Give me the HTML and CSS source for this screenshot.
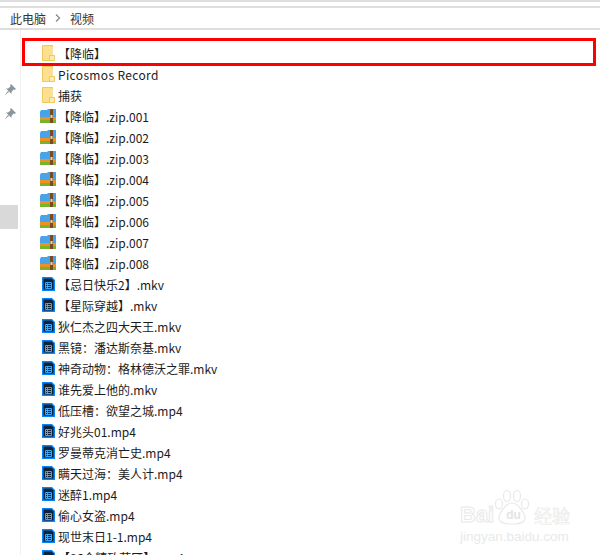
FILE: index.html
```html
<!DOCTYPE html>
<html lang="zh-CN">
<head>
<meta charset="utf-8">
<title>视频</title>
<link rel="stylesheet" href="styles.css">
</head>
<body>
<svg class="defs" width="0" height="0" aria-hidden="true">
  <defs>
    <symbol id="folder" viewBox="0 0 13 16">
      <path d="M.5.5H10.500V15.500H.5Z" fill="#fde08e" stroke="#edc95f"/>
      <path d="M10.500 2V10H12.500V2Z" fill="#fff"/>
      <path d="M7.500 10.500H12.500V15.500H7.500Z" fill="#fdebb5" stroke="#edc95f"/>
    </symbol>
    <symbol id="zip" viewBox="0 0 16 14">
      <path d="M0 3 1 1H7L8 0H16V8H0Z" fill="#48a4e8"/>
      <rect y="8" width="16" height="3" fill="#ee9022"/>
      <rect y="11" width="16" height="3" fill="#74b52c"/>
      <rect x="10" width="3" height="14" fill="#7a4a20"/>
      <rect x="10.500" y="6" width="2" height="3" fill="#e6d9b0"/>
    </symbol>
    <symbol id="video" viewBox="0 0 13 14">
      <path d="M0 0H10L13 3V14H0Z" fill="#0a84f5"/>
      <path d="M1.500 1.500H9.500L11.500 3.500V12.500H1.500Z" fill="#0e2238"/>
      <path d="M3.500 5.500H9.500V11.500H3.500ZM3.500 7.500H9.500M3.500 9.500H9.500M5.500 5.500V11.500" stroke="#3fa4ee" fill="none"/>
    </symbol>
    <symbol id="pin" viewBox="0 0 12 12">
      <path d="M7 0 12 5 10.500 6 9.500 5.500 7.500 8 7.500 10 2 4.500 4 4.500 6.500 2.500 6 1.500ZM4 7 .5 11.500 5 8Z" fill="#8a979f"/>
    </symbol>
  </defs>
</svg>
<div class="window">
  <div class="topband"></div>
  <nav class="crumbs">
    <span>此电脑</span>
    <svg class="chev" viewBox="0 0 6 8" width="6" height="8"><path d="M1 .5 4.500 4 1 7.500" fill="none" stroke="#8a8a8a" stroke-width="1.300"/></svg>
    <span>视频</span>
  </nav>
  <div class="body">
    <aside class="side">
      <svg class="pin"><use href="#pin"/></svg>
      <svg class="pin pin-second"><use href="#pin"/></svg>
      <div class="side-sel"></div>
    </aside>
    <ul class="files">
      <li class="row"><svg class="ico ico-folder"><use href="#folder"/></svg><span>【降临】</span></li>
      <li class="row"><svg class="ico ico-folder"><use href="#folder"/></svg><span class="latin">Picosmos Record</span></li>
      <li class="row"><svg class="ico ico-folder"><use href="#folder"/></svg><span>捕获</span></li>
      <li class="row"><svg class="ico ico-zip"><use href="#zip"/></svg><span>【降临】.zip.001</span></li>
      <li class="row"><svg class="ico ico-zip"><use href="#zip"/></svg><span>【降临】.zip.002</span></li>
      <li class="row"><svg class="ico ico-zip"><use href="#zip"/></svg><span>【降临】.zip.003</span></li>
      <li class="row"><svg class="ico ico-zip"><use href="#zip"/></svg><span>【降临】.zip.004</span></li>
      <li class="row"><svg class="ico ico-zip"><use href="#zip"/></svg><span>【降临】.zip.005</span></li>
      <li class="row"><svg class="ico ico-zip"><use href="#zip"/></svg><span>【降临】.zip.006</span></li>
      <li class="row"><svg class="ico ico-zip"><use href="#zip"/></svg><span>【降临】.zip.007</span></li>
      <li class="row"><svg class="ico ico-zip"><use href="#zip"/></svg><span>【降临】.zip.008</span></li>
      <li class="row"><svg class="ico ico-video"><use href="#video"/></svg><span>【忌日快乐2】.mkv</span></li>
      <li class="row"><svg class="ico ico-video"><use href="#video"/></svg><span>【星际穿越】.mkv</span></li>
      <li class="row"><svg class="ico ico-video"><use href="#video"/></svg><span>狄仁杰之四大天王.mkv</span></li>
      <li class="row"><svg class="ico ico-video"><use href="#video"/></svg><span>黑镜：潘达斯奈基.mkv</span></li>
      <li class="row"><svg class="ico ico-video"><use href="#video"/></svg><span>神奇动物：格林德沃之罪.mkv</span></li>
      <li class="row"><svg class="ico ico-video"><use href="#video"/></svg><span>谁先爱上他的.mkv</span></li>
      <li class="row"><svg class="ico ico-video"><use href="#video"/></svg><span>低压槽：欲望之城.mp4</span></li>
      <li class="row"><svg class="ico ico-video"><use href="#video"/></svg><span>好兆头01.mp4</span></li>
      <li class="row"><svg class="ico ico-video"><use href="#video"/></svg><span>罗曼蒂克消亡史.mp4</span></li>
      <li class="row"><svg class="ico ico-video"><use href="#video"/></svg><span>瞒天过海：美人计.mp4</span></li>
      <li class="row"><svg class="ico ico-video"><use href="#video"/></svg><span>迷醉1.mp4</span></li>
      <li class="row"><svg class="ico ico-video"><use href="#video"/></svg><span>偷心女盗.mp4</span></li>
      <li class="row"><svg class="ico ico-video"><use href="#video"/></svg><span>现世末日1-1.mp4</span></li>
      <li class="row"><svg class="ico ico-video"><use href="#video"/></svg><span>【86个精致节匠】.mp4</span></li>
    </ul>
  </div>
  <div class="highlight"></div>
  <div class="watermark">
    <svg class="paw" viewBox="0 0 36 36" width="36" height="36">
      <g fill="none" stroke="#e9e9e9" stroke-width="1.200">
        <ellipse cx="5" cy="14" rx="3.500" ry="5"/>
        <ellipse cx="13" cy="6" rx="3.500" ry="5.500"/>
        <ellipse cx="23" cy="6" rx="3.500" ry="5.500"/>
        <ellipse cx="31" cy="14" rx="3.500" ry="5"/>
        <path d="M18 13C12 13 2 26 6 31 10 35 26 35 30 31 34 26 24 13 18 13Z"/>
      </g>
    </svg>
    <div class="wm-line"><span class="wm-bai">Bai</span><span class="wm-du">du</span><span class="wm-jy">经验</span></div>
    <div class="wm-url">jingyan.baidu.com</div>
  </div>
</div>
</body>
</html>
```
FILE: styles.css
```css
* { box-sizing: border-box; }
html, body { margin: 0; padding: 0; background: #fff; }
body { width: 600px; height: 555px; overflow: hidden; font-family: "Noto Sans CJK SC", "Open Sans", sans-serif; font-size: 12px; color: #1c1c1c; }
.defs { display: block; height: 0; }
.window { position: relative; width: 600px; height: 555px; overflow: hidden; }
.topband { height: 8px; border-top: 2px solid #dedede; border-bottom: 2px solid #dedede; }
.crumbs { height: 22px; display: flex; align-items: center; gap: 8px; padding-left: 10px; border-bottom: 2px solid #dedede; color: #333; }
.chev { margin: 0 1px; }
.body { display: flex; height: 525px; }
.side { width: 21px; flex: none; border-right: 1px solid #f0f0f0; display: flex; flex-direction: column; align-items: flex-start; }
.pin { width: 12px; height: 12px; margin: 54px 0 0 4px; }
.pin-second { margin-top: 12px; }
.side-sel { width: 18px; height: 24px; background: #d9d9d9; margin-top: 85px; }
.files { list-style: none; margin: 12px 0 0; padding: 0 0 0 19px; flex: 1; }
.row { height: 21px; display: flex; align-items: center; position: relative; padding-left: 18px; white-space: nowrap; }
.row span { margin-top: 2px; }
.latin { letter-spacing: .35px; }
.ico { position: absolute; }
.ico-folder { width: 13px; height: 16px; left: 2px; margin-top: 1px; }
.ico-zip { width: 16px; height: 14px; left: 0; margin-top: 1px; }
.ico-video { width: 13px; height: 14px; left: 2px; margin-top: 1px; }
.highlight { position: absolute; left: 22px; top: 38px; width: 574px; height: 28px; border: 3px solid #f00; }
.watermark { position: absolute; left: 460px; top: 490px; width: 120px; color: #fff; text-align: left; }
.paw { position: absolute; left: 34px; top: 0; }
.wm-line { margin-top: 13px; display: flex; align-items: center; font-family: "Liberation Sans", sans-serif; font-weight: 700; font-size: 22px; line-height: 24px; -webkit-text-stroke: 1px #e9e9e9; }
.wm-du { font-size: 12px; margin: 0 13px 0 12px; -webkit-text-stroke: 0; color: #e4e4e4; }
.wm-jy { font-family: "Noto Sans CJK SC", sans-serif; font-size: 18px; font-weight: 400; -webkit-text-stroke: .6px #e9e9e9; }
.wm-url { font-family: "Liberation Sans", sans-serif; font-size: 13.500px; line-height: 16px; margin-top: 2px; color: #e9e9e9; }
```
